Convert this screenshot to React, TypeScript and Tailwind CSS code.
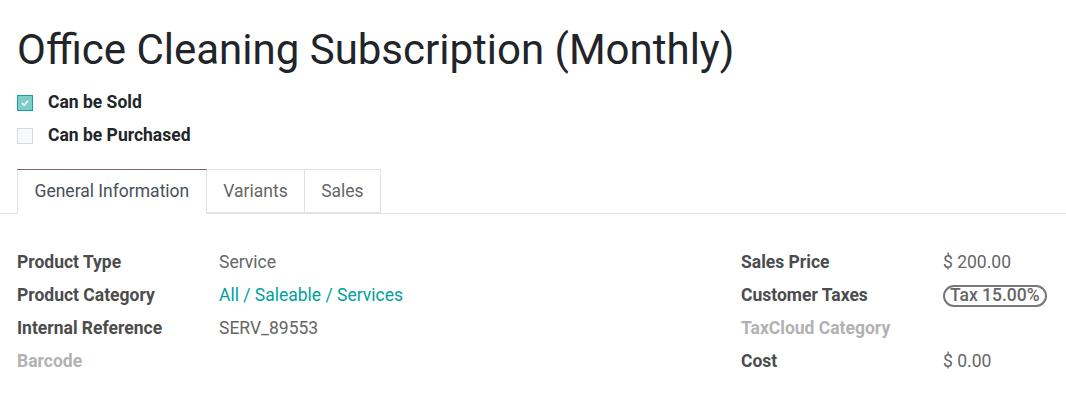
import React from "react";

function Row({ label, value, labelMuted }: { label: string; value?: React.ReactNode; labelMuted?: boolean }) {
  return (
    <div className="flex h-[33px] items-center">
      <div className={`w-[202px] shrink-0 font-bold ${labelMuted ? "text-[#b2b2b2]" : "text-[#4c4c4c]"}`}>{label}</div>
      <div className="whitespace-nowrap text-[#666666]">{value}</div>
    </div>
  );
}

export default function App() {
  return (
    <div className="min-h-[393px] w-[1066px] bg-white text-[17.5px]" style={{ fontFamily: "Roboto, sans-serif" }}>
      <div className="px-[17px] pt-[24px]">
        <h1 className="text-[42px] leading-[52px] text-[#212529]">Office Cleaning Subscription (Monthly)</h1>
        <div className="mt-[10px] flex flex-col">
          <div className="flex h-[33px] items-center">
            <span className="flex h-[16px] w-[16px] items-center justify-center border border-[#1aa39e] bg-[#7dcdc9]">
              <svg width="10" height="10" viewBox="0 0 10 10"><path d="M2 5.2 L4.2 7.2 L8 2.8" stroke="#fff" strokeWidth="1.6" fill="none" /></svg>
            </span>
            <span className="ml-[15px] font-bold text-[#212529]">Can be Sold</span>
          </div>
          <div className="flex h-[33px] items-center">
            <span className="h-[16px] w-[16px] border border-[#d6dadf] bg-[#f8f9fa]" />
            <span className="ml-[15px] font-bold text-[#212529]">Can be Purchased</span>
          </div>
        </div>
      </div>
      <div className="mt-[17px] flex border-b border-[#dee2e6] pl-[17px]">
        <div className="-mb-px flex h-[45px] items-center border border-b-white border-t-[#875a7b] border-x-[#dee2e6] bg-white px-[16.5px] text-[#495057]">General Information</div>
        <div className="flex h-[44px] items-center border-y border-r border-[#dee2e6] px-[16.5px] text-[#666666]">Variants</div>
        <div className="flex h-[44px] items-center border-y border-r border-[#dee2e6] px-[16px] text-[#666666]">Sales</div>
      </div>
      <div className="flex px-[17px] pt-[32px]">
        <div className="w-[724px] shrink-0">
          <Row label="Product Type" value="Service" />
          <Row label="Product Category" value={<span className="text-[#00a09d]">All / Saleable / Services</span>} />
          <Row label="Internal Reference" value="SERV_89553" />
          <Row label="Barcode" labelMuted />
        </div>
        <div className="flex-1">
          <Row label="Sales Price" value="$ 200.00" />
          <Row
            label="Customer Taxes"
            value={
              <span className="inline-flex h-[22px] items-center whitespace-nowrap rounded-full border-2 border-[#777777] px-[5px] font-medium text-[#666666]">Tax 15.00%</span>
            }
          />
          <Row label="TaxCloud Category" labelMuted />
          <Row label="Cost" value="$ 0.00" />
        </div>
      </div>
    </div>
  );
}
